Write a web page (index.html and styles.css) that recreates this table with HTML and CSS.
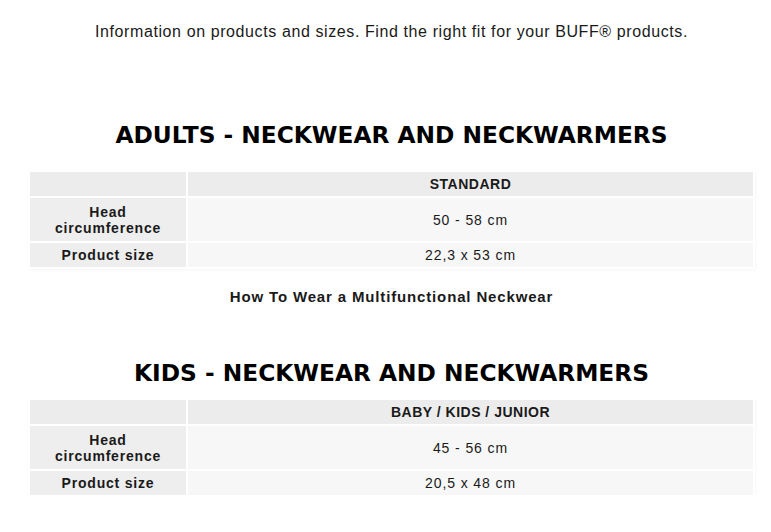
FILE: index.html
```html
<!DOCTYPE html>
<html>
<head>
<meta charset="utf-8">
<link rel="stylesheet" href="styles.css">
</head>
<body>
<main class="page">
  <p class="intro">Information on products and sizes. Find the right fit for your BUFF® products.</p>

  <section class="block adults">
    <h2 class="title">ADULTS - NECKWEAR AND NECKWARMERS</h2>
    <table class="sizes">
      <tr class="head"><th class="corner"></th><th class="col">STANDARD</th></tr>
      <tr class="tall"><th class="label">Head<br>circumference</th><td class="val">50 - 58 cm</td></tr>
      <tr class="short"><th class="label">Product size</th><td class="val">22,3 x 53 cm</td></tr>
    </table>
    <p class="howto">How To Wear a Multifunctional Neckwear</p>
  </section>

  <section class="block kids">
    <h2 class="title">KIDS - NECKWEAR AND NECKWARMERS</h2>
    <table class="sizes">
      <tr class="head"><th class="corner"></th><th class="col">BABY / KIDS / JUNIOR</th></tr>
      <tr class="tall"><th class="label">Head<br>circumference</th><td class="val">45 - 56 cm</td></tr>
      <tr class="short"><th class="label">Product size</th><td class="val">20,5 x 48 cm</td></tr>
    </table>
  </section>
</main>
</body>
</html>
```
FILE: styles.css
```css
html, body {
  margin: 0;
  padding: 0;
  background: #ffffff;
}
.page {
  padding: 0 18px 0 30px;
  font-family: "Liberation Sans", Arial, sans-serif;
  color: #1a1a1a;
}
.intro {
  margin: 0;
  padding-top: 22px;
  text-align: center;
  font-size: 16px;
  line-height: 20px;
  letter-spacing: 0.6px;
}
.adults {
  padding-top: 79px;
}
.adults .title {
  margin-bottom: 23px;
}
.kids {
  padding-top: 53px;
}
.kids .title {
  margin-bottom: 13px;
}
.title {
  margin: 0;
  text-align: center;
  font-family: "DejaVu Sans", Verdana, sans-serif;
  font-weight: bold;
  font-size: 23.3px;
  line-height: 28px;
  color: #000;
}
.sizes {
  width: calc(100% + 4px);
  border-collapse: separate;
  border-spacing: 2px;
  margin: -2px -2px;
  font-size: 14px;
  color: #1a1a1a;
  box-shadow: 1px 1px 3px rgba(0, 0, 0, 0.04);
}
.sizes th, .sizes td {
  padding: 0;
  text-align: center;
}
.corner {
  width: 156px;
  background: #ececec;
}
.col {
  background: #ececec;
  font-weight: bold;
  letter-spacing: 0.5px;
  font-size: 14px;
}
.head th {
  height: 24px;
}
.tall th, .tall td {
  height: 43px;
}
.short th, .short td {
  height: 24px;
}
.label {
  background: #eeeeee;
  font-weight: bold;
  line-height: 16px;
  letter-spacing: 0.8px;
}
.val {
  background: #f7f7f7;
  letter-spacing: 0.9px;
}
.howto {
  margin: 21px 0 0;
  text-align: center;
  font-weight: bold;
  font-size: 15px;
  line-height: 18px;
  letter-spacing: 0.85px;
}
```
